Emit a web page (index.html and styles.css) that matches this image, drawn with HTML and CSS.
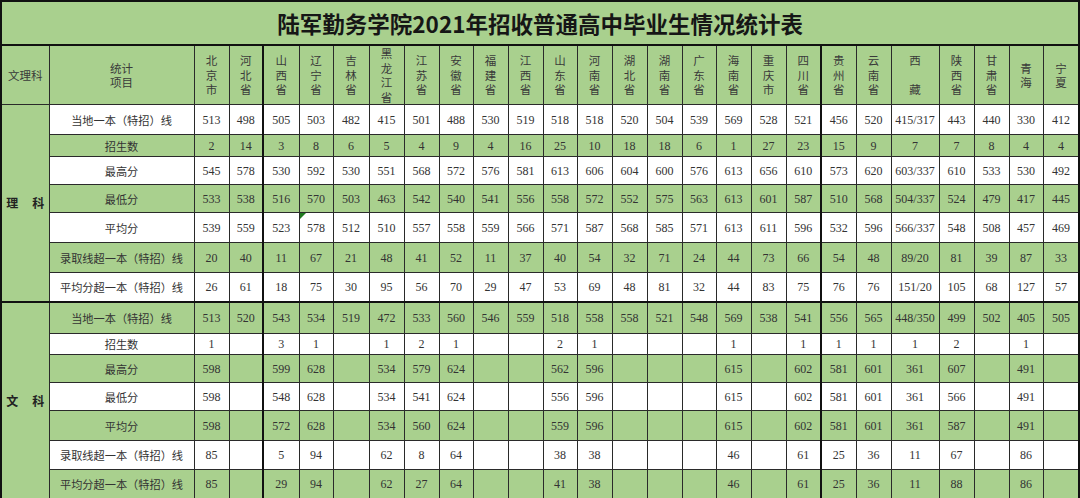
FILE: index.html
```html
<!DOCTYPE html>
<html lang="zh-CN">
<head>
<meta charset="utf-8">
<title>陆军勤务学院2021年招收普通高中毕业生情况统计表</title>
<link rel="stylesheet" href="styles.css">
</head>
<body>
<table class="sheet">
<colgroup>
<col class="c-sec"><col class="c-lab">
<col class="c35"><col class="c34"><col class="c36"><col class="c34"><col class="c36">
<col class="c35"><col class="c35"><col class="c34"><col class="c35"><col class="c35">
<col class="c34"><col class="c35"><col class="c35"><col class="c35"><col class="c34">
<col class="c35"><col class="c35"><col class="c35"><col class="c35"><col class="c35">
<col class="c48"><col class="c35"><col class="c35"><col class="c34"><col class="c36">
</colgroup>
<tr class="r-title"><td class="title" colspan="27">陆军勤务学院2021年招收普通高中毕业生情况统计表</td></tr>
<tr class="r-head g">
<td class="hd thick-top">文理科</td><td class="hd thick-top">统计<br>项目</td>
<td class="hd thick-top">北<br>京<br>市</td><td class="hd thick-top">河<br>北<br>省</td><td class="hd thick-top k">山<br>西<br>省</td><td class="hd thick-top">辽<br>宁<br>省</td><td class="hd thick-top">吉<br>林<br>省</td>
<td class="hd thick-top">黑<br>龙<br>江<br>省</td><td class="hd thick-top">江<br>苏<br>省</td><td class="hd thick-top">安<br>徽<br>省</td><td class="hd thick-top">福<br>建<br>省</td><td class="hd thick-top">江<br>西<br>省</td>
<td class="hd thick-top">山<br>东<br>省</td><td class="hd thick-top">河<br>南<br>省</td><td class="hd thick-top">湖<br>北<br>省</td><td class="hd thick-top">湖<br>南<br>省</td><td class="hd thick-top">广<br>东<br>省</td>
<td class="hd thick-top">海<br>南<br>省</td><td class="hd thick-top">重<br>庆<br>市</td><td class="hd thick-top">四<br>川<br>省</td><td class="hd thick-top k">贵<br>州<br>省</td><td class="hd thick-top">云<br>南<br>省</td>
<td class="hd thick-top">西<br><br>藏</td><td class="hd thick-top">陕<br>西<br>省</td><td class="hd thick-top">甘<br>肃<br>省</td><td class="hd thick-top">青<br>海</td><td class="hd thick-top">宁<br>夏</td>
</tr>

<tr class="h30">
<td class="sec" rowspan="7">理<span class="gap"></span>科</td><td class="lab">当地一本（特招）线</td>
<td>513</td><td>498</td><td class="k">505</td><td>503</td><td>482</td><td>415</td><td>501</td><td>488</td><td>530</td><td>519</td><td>518</td><td>518</td><td>520</td><td>504</td><td>539</td><td>569</td><td>528</td><td>521</td><td class="k">456</td><td>520</td><td>415/317</td><td>443</td><td>440</td><td>330</td><td>412</td>
</tr>
<tr class="h22 g">
<td class="lab">招生数</td>
<td>2</td><td>14</td><td class="k">3</td><td>8</td><td>6</td><td>5</td><td>4</td><td>9</td><td>4</td><td>16</td><td>25</td><td>10</td><td>18</td><td>18</td><td>6</td><td>1</td><td>27</td><td>23</td><td class="k">15</td><td>9</td><td>7</td><td>7</td><td>8</td><td>4</td><td>4</td>
</tr>
<tr class="h28">
<td class="lab">最高分</td>
<td>545</td><td>578</td><td class="k">530</td><td>592</td><td>530</td><td>551</td><td>568</td><td>572</td><td>576</td><td>581</td><td>613</td><td>606</td><td>604</td><td>600</td><td>576</td><td>613</td><td>656</td><td>610</td><td class="k">573</td><td>620</td><td>603/337</td><td>610</td><td>533</td><td>530</td><td>492</td>
</tr>
<tr class="h28 g">
<td class="lab">最低分</td>
<td>533</td><td>538</td><td class="k">516</td><td>570</td><td>503</td><td>463</td><td>542</td><td>540</td><td>541</td><td>556</td><td>558</td><td>572</td><td>552</td><td>575</td><td>563</td><td>613</td><td>601</td><td>587</td><td class="k">510</td><td>568</td><td>504/337</td><td>524</td><td>479</td><td>417</td><td>445</td>
</tr>
<tr class="h30">
<td class="lab">平均分</td>
<td>539</td><td>559</td><td class="k">523</td><td class="flag">578<span class="tri"></span></td><td>512</td><td>510</td><td>557</td><td>558</td><td>559</td><td>566</td><td>571</td><td>587</td><td>568</td><td>585</td><td>571</td><td>613</td><td>611</td><td>596</td><td class="k">532</td><td>596</td><td>566/337</td><td>548</td><td>508</td><td>457</td><td>469</td>
</tr>
<tr class="h30 g">
<td class="lab">录取线超一本（特招）线</td>
<td>20</td><td>40</td><td class="k">11</td><td>67</td><td>21</td><td>48</td><td>41</td><td>52</td><td>11</td><td>37</td><td>40</td><td>54</td><td>32</td><td>71</td><td>24</td><td>44</td><td>73</td><td>66</td><td class="k">54</td><td>48</td><td>89/20</td><td>81</td><td>39</td><td>87</td><td>33</td>
</tr>
<tr class="h29">
<td class="lab">平均分超一本（特招）线</td>
<td>26</td><td>61</td><td class="k">18</td><td>75</td><td>30</td><td>95</td><td>56</td><td>70</td><td>29</td><td>47</td><td>53</td><td>69</td><td>48</td><td>81</td><td>32</td><td>44</td><td>83</td><td>75</td><td class="k">76</td><td>76</td><td>151/20</td><td>105</td><td>68</td><td>127</td><td>57</td>
</tr>

<tr class="h32 g split">
<td class="sec" rowspan="7">文<span class="gap"></span>科</td><td class="lab">当地一本（特招）线</td>
<td>513</td><td>520</td><td class="k">543</td><td>534</td><td>519</td><td>472</td><td>533</td><td>560</td><td>546</td><td>559</td><td>518</td><td>558</td><td>558</td><td>521</td><td>548</td><td>569</td><td>538</td><td>541</td><td class="k">556</td><td>565</td><td>448/350</td><td>499</td><td>502</td><td>405</td><td>505</td>
</tr>
<tr class="h21">
<td class="lab">招生数</td>
<td>1</td><td></td><td class="k">3</td><td>1</td><td></td><td>1</td><td>2</td><td>1</td><td></td><td></td><td>2</td><td>1</td><td></td><td></td><td></td><td>1</td><td></td><td>1</td><td class="k">1</td><td>1</td><td>1</td><td>2</td><td></td><td>1</td><td></td>
</tr>
<tr class="h28 g">
<td class="lab">最高分</td>
<td>598</td><td></td><td class="k">599</td><td>628</td><td></td><td>534</td><td>579</td><td>624</td><td></td><td></td><td>562</td><td>596</td><td></td><td></td><td></td><td>615</td><td></td><td>602</td><td class="k">581</td><td>601</td><td>361</td><td>607</td><td></td><td>491</td><td></td>
</tr>
<tr class="h28">
<td class="lab">最低分</td>
<td>598</td><td></td><td class="k">548</td><td>628</td><td></td><td>534</td><td>541</td><td>624</td><td></td><td></td><td>556</td><td>596</td><td></td><td></td><td></td><td>615</td><td></td><td>602</td><td class="k">581</td><td>601</td><td>361</td><td>566</td><td></td><td>491</td><td></td>
</tr>
<tr class="h30 g">
<td class="lab">平均分</td>
<td>598</td><td></td><td class="k">572</td><td>628</td><td></td><td>534</td><td>560</td><td>624</td><td></td><td></td><td>559</td><td>596</td><td></td><td></td><td></td><td>615</td><td></td><td>602</td><td class="k">581</td><td>601</td><td>361</td><td>587</td><td></td><td>491</td><td></td>
</tr>
<tr class="h29">
<td class="lab">录取线超一本（特招）线</td>
<td>85</td><td></td><td class="k">5</td><td>94</td><td></td><td>62</td><td>8</td><td>64</td><td></td><td></td><td>38</td><td>38</td><td></td><td></td><td></td><td>46</td><td></td><td>61</td><td class="k">25</td><td>36</td><td>11</td><td>67</td><td></td><td>86</td><td></td>
</tr>
<tr class="h30 g">
<td class="lab">平均分超一本（特招）线</td>
<td>85</td><td></td><td class="k">29</td><td>94</td><td></td><td>62</td><td>27</td><td>64</td><td></td><td></td><td>41</td><td>38</td><td></td><td></td><td></td><td>46</td><td></td><td>61</td><td class="k">25</td><td>36</td><td>11</td><td>88</td><td></td><td>86</td><td></td>
</tr>
</table>
</body>
</html>
```

FILE: styles.css
```css
html, body {
  margin: 0;
  padding: 0;
  background: #ffffff;
}

.sheet {
  border-collapse: collapse;
  table-layout: fixed;
  width: 1080px;
  border: 2px solid #111;
  font-family: "Liberation Serif", "Noto Sans CJK SC", serif;
  color: #333;
}

.c-sec { width: 48px; }
.c-lab { width: 145px; }
.c34 { width: 34px; }
.c35 { width: 35px; }
.c36 { width: 36px; }
.c48 { width: 48px; }

.sheet td {
  border: 1px solid #2a2a2a;
  padding: 0;
  text-align: center;
  vertical-align: middle;
  font-size: 12px;
  line-height: 14px;
  white-space: nowrap;
  overflow: hidden;
  background: #ffffff;
}

.sheet tr.g td,
.sheet td.sec,
.sheet td.title {
  background: #a9d08e;
}

.sheet td.title {
  font-family: "Noto Sans CJK SC", sans-serif;
  font-weight: 700;
  font-size: 22.5px;
  line-height: 30px;
  color: #161616;
  border-bottom: 2px solid #111;
}

.r-title { height: 44px; }
.r-head { height: 57px; }

.sheet td.hd {
  font-family: "Noto Sans CJK SC", sans-serif;
  font-size: 11.5px;
  line-height: 14.5px;
  color: #3a3a3a;
  overflow: visible;
}

.sheet td.thick-top {
  border-top: 2px solid #111;
}

.sheet td.lab {
  font-family: "Noto Sans CJK SC", sans-serif;
  font-size: 11.2px;
  color: #333;
}

.sheet td.sec {
  font-family: "Noto Sans CJK SC", sans-serif;
  font-weight: 700;
  font-size: 12px;
  color: #222;
}

.gap {
  display: inline-block;
  width: 14px;
}

.sheet td.k {
  border-left: 2px solid #111;
}

.sheet tr.split td {
  border-top: 2px solid #111;
}

.h21 { height: 21px; }
.h22 { height: 22px; }
.h28 { height: 28px; }
.h29 { height: 29px; }
.h30 { height: 30px; }
.h32 { height: 32px; }

.sheet td.flag {
  position: relative;
}

.tri {
  position: absolute;
  left: 0;
  top: 0;
  width: 0;
  height: 0;
  border-top: 6px solid #1f7a1f;
  border-right: 6px solid transparent;
}
```
